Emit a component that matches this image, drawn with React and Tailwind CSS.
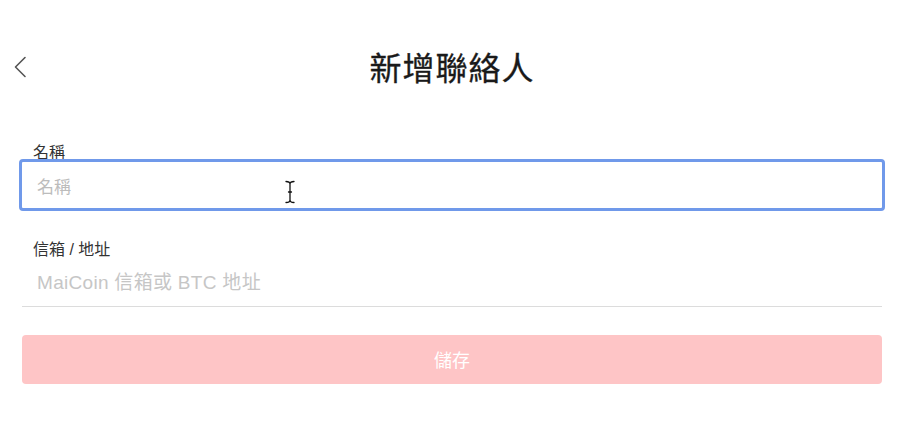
import React from 'react';

const cjk = { fontFamily: '"Noto Sans CJK TC", "Noto Sans", sans-serif' };
const mixed = { fontFamily: '"Liberation Sans", "Noto Sans CJK TC", sans-serif' };

function BackIcon() {
  return (
    <svg width="16" height="24" viewBox="0 0 16 24" fill="none">
      <path d="M13 2.5 L3.5 12 L13 21.5" stroke="#555" strokeWidth="1.6" strokeLinecap="round" strokeLinejoin="round" />
    </svg>
  );
}

function IBeam() {
  return (
    <svg width="10" height="24" viewBox="0 0 10 24" fill="none">
      <path d="M1 1.5 Q5 1.5 5 4 Q5 1.5 9 1.5 M5 4 L5 20 M1 22.5 Q5 22.5 5 20 Q5 22.5 9 22.5 M3.5 12 L6.5 12" stroke="#111" strokeWidth="1.3" strokeLinecap="round" />
    </svg>
  );
}

export default function App() {
  return (
    <div className="w-[904px] h-[431px] bg-white text-[#333]" style={cjk}>
      {/* header */}
      <div className="relative flex items-center justify-center h-[132px]">
        <button className="absolute left-[12px] top-[55px]">
          <BackIcon />
        </button>
        <h1 className="text-[32px] leading-none font-normal text-[#1a1a1a] tracking-[1px] [-webkit-text-stroke:0.3px_#1a1a1a]">新增聯絡人</h1>
      </div>

      <div className="px-[22px]">
        {/* name */}
        <label className="block mt-[11px] pl-[11px] text-[16px] leading-[16px] text-[#333]">名稱</label>
        <div className="relative -mx-[3px]">
          <input
            placeholder="名稱"
            className="w-full h-[52px] border-[3px] border-[#7099ea] rounded-[4px] px-[15px] text-[17px] outline-none placeholder:text-[#bcbcbc]"
            style={cjk}
          />
          <div className="absolute left-[266px] top-[21px] pointer-events-none">
            <IBeam />
          </div>
        </div>

        {/* email / address */}
        <label className="block mt-[31px] pl-[11px] text-[16px] leading-[16px] text-[#333]" style={mixed}>信箱 / 地址</label>
        <input
          placeholder="MaiCoin 信箱或 BTC 地址"
          className="w-full h-[49px] pl-[15px] pt-[1px] border-b border-[#dcdcdc] text-[19px] tracking-[0.3px] outline-none placeholder:text-[#c6c6c6]"
          style={mixed}
        />

        {/* save */}
        <button className="mt-[28px] w-full h-[49px] rounded-[4px] bg-[#fec5c6] text-white text-[18px] flex items-center justify-center">
          儲存
        </button>
      </div>
    </div>
  );
}
